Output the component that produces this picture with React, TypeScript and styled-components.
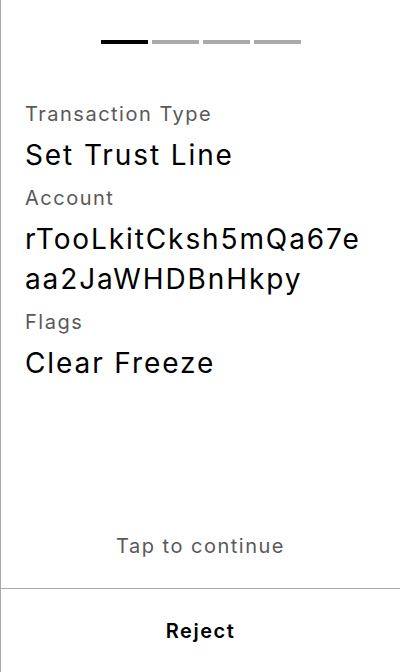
import React from "react";
import styled, { createGlobalStyle } from "styled-components";

const Global = createGlobalStyle`
  html, body { margin: 0; padding: 0; background: #fff; }
  body { font-family: Inter, "Noto Sans", sans-serif; }
  * { box-sizing: border-box; }
`;

const Screen = styled.div`
  height: 672px;
  width: 400px;
  display: flex;
  flex-direction: column;
  border-left: 1px solid #aaaaaa;
  background: #fff;
`;

const Progress = styled.div`
  display: flex;
  justify-content: center;
  gap: 4px;
  margin-top: 40px;
`;

const Segment = styled.div<{ $active?: boolean }>`
  width: 47px;
  height: 4px;
  background: ${(p) => (p.$active ? "#000" : "#aaaaaa")};
`;

const Fields = styled.div`
  display: flex;
  flex-direction: column;
  padding: 0 30px 0 24px;
  margin-top: 58px;
`;

const Label = styled.div`
  font-size: 20px;
  line-height: 24px;
  letter-spacing: 1.5px;
  color: #595959;
  margin-bottom: 9px;
`;

const Value = styled.div`
  font-size: 28px;
  line-height: 40px;
  letter-spacing: 1.9px;
  color: #000;
  word-break: break-all;
  margin-bottom: 11px;
`;

const Spacer = styled.div`
  flex: 1;
`;

const Hint = styled.div`
  text-align: center;
  font-size: 20px;
  line-height: 24px;
  letter-spacing: 1.5px;
  color: #595959;
  margin-bottom: 30px;
`;

const Footer = styled.div`
  border-top: 1px solid #aaaaaa;
  height: 84px;
  display: flex;
  align-items: center;
  justify-content: center;
`;

const RejectButton = styled.button`
  border: none;
  background: none;
  font-family: Inter, "Noto Sans", sans-serif;
  font-size: 20px;
  font-weight: 600;
  letter-spacing: 1.5px;
  color: #000;
  cursor: pointer;
  padding: 0;
`;

const fields = [
  { label: "Transaction Type", value: "Set Trust Line" },
  { label: "Account", value: "rTooLkitCksh5mQa67eaa2JaWHDBnHkpy" },
  { label: "Flags", value: "Clear Freeze" },
];

export default function App() {
  return (
    <>
      <Global />
      <Screen>
        <Progress>
          <Segment $active />
          <Segment />
          <Segment />
          <Segment />
        </Progress>
        <Fields>
          {fields.map((f) => (
            <React.Fragment key={f.label}>
              <Label>{f.label}</Label>
              <Value>{f.value}</Value>
            </React.Fragment>
          ))}
        </Fields>
        <Spacer />
        <Hint>Tap to continue</Hint>
        <Footer>
          <RejectButton>Reject</RejectButton>
        </Footer>
      </Screen>
    </>
  );
}
